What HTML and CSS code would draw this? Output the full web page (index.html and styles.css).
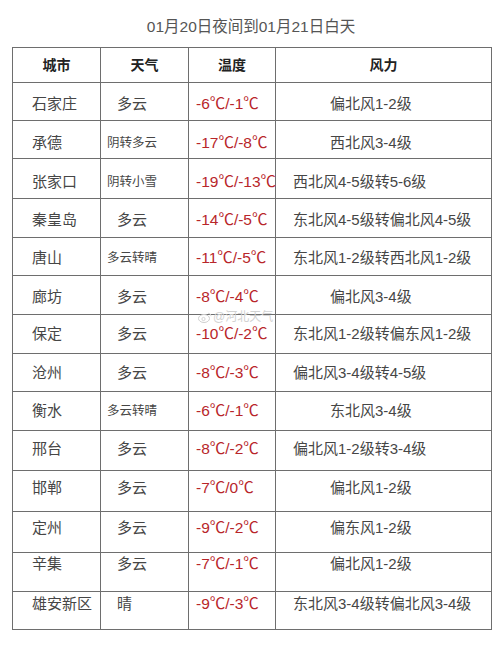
FILE: index.html
```html
<!DOCTYPE html>
<html lang="zh-CN">
<head>
<meta charset="utf-8">
<title>01月20日夜间到01月21日白天</title>
<link rel="stylesheet" href="styles.css">
</head>
<body>
<div class="page">
  <h1 class="title">01月20日夜间到01月21日白天</h1>
  <div class="table-wrap">
    <table class="weather">
      <colgroup>
        <col class="c-city"><col class="c-wx"><col class="c-temp"><col class="c-wind">
      </colgroup>
      <thead>
        <tr><th>城市</th><th>天气</th><th>温度</th><th>风力</th></tr>
      </thead>
      <tbody>
        <tr><td class="city">石家庄</td><td class="wx">多云</td><td class="temp">-6℃/-1℃</td><td class="wind short">偏北风1-2级</td></tr>
        <tr><td class="city">承德</td><td class="wx sm">阴转多云</td><td class="temp">-17℃/-8℃</td><td class="wind short">西北风3-4级</td></tr>
        <tr><td class="city">张家口</td><td class="wx sm">阴转小雪</td><td class="temp">-19℃/-13℃</td><td class="wind">西北风4-5级转5-6级</td></tr>
        <tr><td class="city">秦皇岛</td><td class="wx">多云</td><td class="temp">-14℃/-5℃</td><td class="wind">东北风4-5级转偏北风4-5级</td></tr>
        <tr><td class="city">唐山</td><td class="wx sm">多云转晴</td><td class="temp">-11℃/-5℃</td><td class="wind">东北风1-2级转西北风1-2级</td></tr>
        <tr><td class="city">廊坊</td><td class="wx">多云</td><td class="temp">-8℃/-4℃</td><td class="wind short">偏北风3-4级</td></tr>
        <tr><td class="city">保定</td><td class="wx">多云</td><td class="temp">-10℃/-2℃</td><td class="wind">东北风1-2级转偏东风1-2级</td></tr>
        <tr><td class="city">沧州</td><td class="wx">多云</td><td class="temp">-8℃/-3℃</td><td class="wind">偏北风3-4级转4-5级</td></tr>
        <tr><td class="city">衡水</td><td class="wx sm">多云转晴</td><td class="temp">-6℃/-1℃</td><td class="wind short">东北风3-4级</td></tr>
        <tr><td class="city">邢台</td><td class="wx">多云</td><td class="temp">-8℃/-2℃</td><td class="wind">偏北风1-2级转3-4级</td></tr>
        <tr><td class="city">邯郸</td><td class="wx">多云</td><td class="temp">-7℃/0℃</td><td class="wind short">偏北风1-2级</td></tr>
        <tr><td class="city">定州</td><td class="wx">多云</td><td class="temp">-9℃/-2℃</td><td class="wind short">偏东风1-2级</td></tr>
        <tr><td class="city">辛集</td><td class="wx">多云</td><td class="temp">-7℃/-1℃</td><td class="wind short">偏北风1-2级</td></tr>
        <tr><td class="city">雄安新区</td><td class="wx">晴</td><td class="temp">-9℃/-3℃</td><td class="wind">东北风3-4级转偏北风3-4级</td></tr>
      </tbody>
    </table>
    <div class="watermark">
      <svg class="wm-logo" width="14" height="11" viewBox="0 0 14 11" aria-hidden="true">
        <ellipse cx="6" cy="6.5" rx="5.5" ry="4" fill="none" stroke="#cfcfcf" stroke-width="1"/>
        <circle cx="5.5" cy="7" r="1.6" fill="none" stroke="#cfcfcf" stroke-width="0.9"/>
        <path d="M10 1.2 A3 3 0 0 1 13 4.2" fill="none" stroke="#d6d6d6" stroke-width="0.9"/>
      </svg>
      <span>@河北天气</span>
    </div>
  </div>
</div>
</body>
</html>
```

FILE: styles.css
```css
* { box-sizing: border-box; }

html, body {
  margin: 0;
  padding: 0;
  background: #ffffff;
}

body {
  width: 500px;
  height: 646px;
  overflow: hidden;
  font-family: "Liberation Sans", "Noto Sans CJK SC", sans-serif;
  color: #464646;
}

.page {
  padding: 16px 0 0 12px;
}

.title {
  margin: 0 0 9px 0;
  width: 478px;
  text-align: center;
  font-size: 15.5px;
  line-height: 22px;
  font-weight: normal;
  color: #555555;
}

.table-wrap {
  position: relative;
  width: 479px;
}

.weather {
  width: 479px;
  border-collapse: collapse;
  table-layout: fixed;
}

.c-city { width: 88px; }
.c-wx { width: 88px; }
.c-temp { width: 87px; }
.c-wind { width: 216px; }

.weather th,
.weather td {
  border: 1px solid #6e6e6e;
  padding: 0;
  white-space: nowrap;
  overflow: visible;
}

.weather th {
  height: 35px;
  font-size: 14px;
  font-weight: bold;
  color: #222222;
  text-align: center;
  vertical-align: middle;
  line-height: 20px;
}

.weather td {
  vertical-align: top;
  font-size: 15px;
  line-height: 20px;
  text-align: left;
}

.city { padding-left: 19px !important; color: #464646; }
.wx { padding-left: 16px !important; color: #464646; }
.wx.sm { padding-left: 6px !important; font-size: 12.5px; }
.temp { padding-left: 7px !important; color: #b8262a; font-size: 15.5px !important; }
.wind { padding-left: 17px !important; color: #464646; }
.wind.short { padding-left: 54px !important; }

.weather tbody tr:nth-child(1) { height: 38px; }
.weather tbody tr:nth-child(2) { height: 38px; }
.weather tbody tr:nth-child(3) { height: 40px; }
.weather tbody tr:nth-child(4) { height: 39px; }
.weather tbody tr:nth-child(5) { height: 38px; }
.weather tbody tr:nth-child(6) { height: 39px; }
.weather tbody tr:nth-child(7) { height: 39px; }
.weather tbody tr:nth-child(8) { height: 38px; }
.weather tbody tr:nth-child(9) { height: 39px; }
.weather tbody tr:nth-child(10) { height: 40px; }
.weather tbody tr:nth-child(11) { height: 41px; }
.weather tbody tr:nth-child(12) { height: 41px; }
.weather tbody tr:nth-child(13) { height: 39px; }
.weather tbody tr:nth-child(14) { height: 38px; }

.weather tbody tr:nth-child(1) td { padding-top: 11px; }
.weather tbody tr:nth-child(2) td { padding-top: 12px; }
.weather tbody tr:nth-child(3) td { padding-top: 13px; }
.weather tbody tr:nth-child(4) td { padding-top: 11px; }
.weather tbody tr:nth-child(5) td { padding-top: 10px; }
.weather tbody tr:nth-child(6) td { padding-top: 11px; }
.weather tbody tr:nth-child(7) td { padding-top: 9px; }
.weather tbody tr:nth-child(8) td { padding-top: 9px; }
.weather tbody tr:nth-child(9) td { padding-top: 9px; }
.weather tbody tr:nth-child(10) td { padding-top: 8px; }
.weather tbody tr:nth-child(11) td { padding-top: 7px; }
.weather tbody tr:nth-child(12) td { padding-top: 6px; }
.weather tbody tr:nth-child(13) td { padding-top: 1px; }
.weather tbody tr:nth-child(14) td { padding-top: 2px; }

.watermark {
  position: absolute;
  left: 186px;
  top: 264px;
  display: flex;
  align-items: center;
  gap: 1px;
  font-size: 12px;
  line-height: 12px;
  color: #d2d2d2;
  pointer-events: none;
}
```
